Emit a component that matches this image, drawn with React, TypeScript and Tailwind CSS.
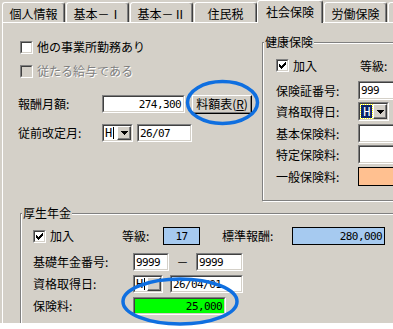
import React from "react";

const JP = "font-['Noto_Sans_CJK_JP',sans-serif]";
const MONO = "font-['DejaVu_Sans_Mono',monospace] text-[11px] tracking-[-0.6px] leading-none";

function CheckMark() {
  const px: [number, number][] = [
    [6, 0], [5, 1], [6, 1], [0, 2], [4, 2], [5, 2], [6, 2],
    [0, 3], [1, 3], [3, 3], [4, 3], [5, 3],
    [0, 4], [1, 4], [2, 4], [3, 4], [4, 4],
    [1, 5], [2, 5], [3, 5], [2, 6],
  ];
  return (
    <svg width="7" height="7" viewBox="0 0 7 7" shapeRendering="crispEdges">
      {px.map(([x, y], i) => (
        <rect key={i} x={x} y={y} width="1" height="1" fill="#000" />
      ))}
    </svg>
  );
}

function Check({ checked, disabled }: { checked?: boolean; disabled?: boolean }) {
  return (
    <div className="w-[13px] h-[13px] shrink-0 border border-t-[#808080] border-l-[#808080] border-b-white border-r-white">
      <div
        className={`w-full h-full border border-t-[#404040] border-l-[#404040] border-b-[#d4d0c8] border-r-[#d4d0c8] flex items-center justify-center ${
          disabled ? "bg-[#d4d0c8]" : "bg-white"
        }`}
      >
        {checked && <CheckMark />}
      </div>
    </div>
  );
}

function Edit({
  className = "",
  bg = "bg-white",
  right,
  children,
}: {
  className?: string;
  bg?: string;
  right?: boolean;
  children?: React.ReactNode;
}) {
  return (
    <div className={`shrink-0 border border-t-[#808080] border-l-[#808080] border-b-white border-r-white ${className}`}>
      <div
        className={`w-full h-full border border-t-[#404040] border-l-[#404040] border-b-[#d4d0c8] border-r-[#d4d0c8] ${bg} flex items-center ${
          right ? "justify-end pr-[2px]" : "pl-[1px]"
        } ${MONO} text-black overflow-hidden`}
      >
        {children}
      </div>
    </div>
  );
}

function Flat({
  className = "",
  bg,
  children,
}: {
  className?: string;
  bg: string;
  children?: React.ReactNode;
}) {
  return (
    <div className={`shrink-0 border border-black ${bg} flex items-center justify-end pr-[2px] ${MONO} ${className}`}>
      {children}
    </div>
  );
}

function Arrow() {
  return (
    <svg width="7" height="4" viewBox="0 0 7 4" shapeRendering="crispEdges">
      <rect x="0" y="0" width="7" height="1" fill="#000" />
      <rect x="1" y="1" width="5" height="1" fill="#000" />
      <rect x="2" y="2" width="3" height="1" fill="#000" />
      <rect x="3" y="3" width="1" height="1" fill="#000" />
    </svg>
  );
}

function Combo({
  className = "",
  selected,
  arrow = true,
}: {
  className?: string;
  selected?: boolean;
  arrow?: boolean;
}) {
  return (
    <div className={`shrink-0 border border-t-[#808080] border-l-[#808080] border-b-white border-r-white ${className}`}>
      <div className="w-full h-full border border-t-[#404040] border-l-[#404040] border-b-[#d4d0c8] border-r-[#d4d0c8] bg-white flex">
        <div className="flex-1 flex items-center pl-[1px] overflow-hidden">
          {selected ? (
            <div className="h-[13px] w-[11px] bg-[#0a246a] text-white flex items-center justify-center outline-1 outline-dotted outline-[#ffff00]">
              <span className={`${MONO} text-[12px]`}>H</span>
            </div>
          ) : (
            <>
              <span className={`${MONO} text-[12px]`}>H</span>
              <div className="w-[1px] h-[12px] bg-black ml-[1px]" />
            </>
          )}
        </div>
        <div className="w-[14px] h-full bg-[#d4d0c8] border border-t-white border-l-white border-b-[#404040] border-r-[#404040] shadow-[inset_-1px_-1px_0_#808080] flex items-center justify-center">
          {arrow && <Arrow />}
        </div>
      </div>
    </div>
  );
}

function Tab({ label, selected, w = "w-[63px]" }: { label: string; selected?: boolean; w?: string }) {
  if (selected) {
    return (
      <div className="relative z-10 -ml-[1px] mr-[1px] -mb-[1px] h-[23px] w-[66px] shrink-0 bg-[#d4d0c8] border-t border-l border-white border-r border-r-[#404040] rounded-t-[3px] shadow-[inset_-1px_0_0_#808080] flex justify-center pt-[5px]">
        <span className="text-[12px] leading-none">{label}</span>
      </div>
    );
  }
  return (
    <div className={`mr-[1px] h-[20px] ${w} shrink-0 border-t border-l border-white border-r border-r-[#404040] rounded-t-[3px] shadow-[inset_-1px_0_0_#808080] flex justify-center pt-[5px]`}>
      <span className="text-[12px] leading-none whitespace-nowrap">{label}</span>
    </div>
  );
}

function Group({
  title,
  className = "",
  children,
}: {
  title: string;
  className?: string;
  children?: React.ReactNode;
}) {
  return (
    <div className={`relative shrink-0 border border-[#808080] shadow-[inset_1px_1px_0_#fff,1px_1px_0_#fff] ${className}`}>
      <span className="absolute -top-[8px] left-[1px] bg-[#d4d0c8] px-[1px] text-[12px] leading-[14px] whitespace-nowrap">
        {title}
      </span>
      {children}
    </div>
  );
}

const L = "text-[12px] leading-none whitespace-nowrap shrink-0";

export default function App() {
  return (
    <div className={`w-[393px] h-[329px] bg-white overflow-hidden relative ${JP} text-black`}>
      <div className="h-[323px] bg-[#d4d0c8] flex flex-col overflow-hidden">
        {/* tabs */}
        <div className="h-[22px] flex items-end pl-[2px] shrink-0">
          <Tab label="個人情報" />
          <Tab label="基本－Ⅰ" />
          <Tab label="基本－Ⅱ" />
          <Tab label="住民税" />
          <Tab label="社会保険" selected />
          <Tab label="労働保険" />
          <Tab label="" w="w-[40px]" />
        </div>
        {/* panel */}
        <div className="flex-1 ml-[2px] border-t border-l border-white flex flex-col">
          <div className="flex shrink-0">
            {/* left column */}
            <div className="w-[256px] shrink-0 flex flex-col">
              <div className="mt-[17px] h-[14px] flex items-center pl-[17px]">
                <Check />
                <span className={`${L} ml-[4px]`}>他の事業所勤務あり</span>
              </div>
              <div className="mt-[10px] h-[14px] flex items-center pl-[17px]">
                <Check disabled />
                <span className={`${L} ml-[4px] text-[#808080] [text-shadow:1px_1px_0_#fff]`}>従たる給与である</span>
              </div>
              <div className="mt-[17px] h-[18px] flex items-center pl-[15px]">
                <span className={`${L} w-[84px]`}>報酬月額:</span>
                <Edit className="w-[83px] h-[18px]" right>
                  274,300
                </Edit>
                <div className="ml-[7px] w-[60px] h-[19px] shrink-0 border border-t-white border-l-white border-b-black border-r-black shadow-[inset_-1px_-1px_0_#808080] flex items-center justify-center">
                  <span className="text-[12px] leading-none whitespace-nowrap">
                    料額表(<span className="underline">R</span>)
                  </span>
                </div>
              </div>
              <div className="mt-[11px] h-[18px] flex items-center pl-[15px]">
                <span className={`${L} w-[84px]`}>従前改定月:</span>
                <Combo className="w-[31px] h-[18px]" />
                <Edit className="ml-[4px] w-[55px] h-[18px]">26/07</Edit>
              </div>
            </div>
            {/* 健康保険 */}
            <Group title="健康保険" className="mt-[19px] ml-[3px] w-[160px] h-[159px]">
              <div className="flex flex-col pl-[13px]">
                <div className="mt-[16px] h-[13px] flex items-center">
                  <div className="w-[84px] flex items-center shrink-0">
                    <Check checked />
                    <span className={`${L} ml-[4px]`}>加入</span>
                  </div>
                  <span className={L}>等級:</span>
                </div>
                <div className="mt-[9px] h-[19px] flex items-center">
                  <span className={`${L} w-[82px]`}>保険証番号:</span>
                  <Edit className="w-[60px] h-[19px]">999</Edit>
                </div>
                <div className="mt-[2px] h-[19px] flex items-center">
                  <span className={`${L} w-[82px]`}>資格取得日:</span>
                  <Combo className="w-[31px] h-[19px]" selected />
                  <Edit className="ml-[5px] w-[40px] h-[19px]" />
                </div>
                <div className="mt-[3px] h-[19px] flex items-center">
                  <span className={`${L} w-[82px]`}>基本保険料:</span>
                  <Edit className="w-[60px] h-[19px]" />
                </div>
                <div className="mt-[2px] h-[19px] flex items-center">
                  <span className={`${L} w-[82px]`}>特定保険料:</span>
                  <Edit className="w-[60px] h-[19px]" />
                </div>
                <div className="mt-[3px] h-[19px] flex items-center">
                  <span className={`${L} w-[82px]`}>一般保険料:</span>
                  <Flat className="w-[60px] h-[19px]" bg="bg-[#ffc090]" />
                </div>
              </div>
            </Group>
          </div>
          {/* 厚生年金 */}
          <Group title="厚生年金" className="mt-[12px] ml-[17px] w-[400px] h-[140px]">
            <div className="flex flex-col pl-[12px]">
              <div className="mt-[13px] h-[18px] flex items-center">
                <div className="w-[89px] flex items-center shrink-0">
                  <Check checked />
                  <span className={`${L} ml-[4px]`}>加入</span>
                </div>
                <span className={`${L} w-[41px]`}>等級:</span>
                <Flat className="w-[37px] h-[18px] !justify-center !pr-0" bg="bg-[#a6caf0]">
                  17
                </Flat>
                <span className={`${L} ml-[22px] w-[70px]`}>標準報酬:</span>
                <Flat className="w-[93px] h-[18px]" bg="bg-[#a6caf0]">
                  280,000
                </Flat>
              </div>
              <div className="mt-[8px] h-[18px] flex items-center">
                <span className={`${L} w-[100px]`}>基礎年金番号:</span>
                <Edit className="w-[36px] h-[18px]">9999</Edit>
                <span className={`${L} w-[27px] text-center`}>－</span>
                <Edit className="w-[47px] h-[18px]">9999</Edit>
              </div>
              <div className="mt-[4px] h-[18px] flex items-center">
                <span className={`${L} w-[100px]`}>資格取得日:</span>
                <Combo className="w-[30px] h-[18px]" arrow={false} />
                <Edit className="ml-[7px] w-[73px] h-[18px]">26/04/01</Edit>
              </div>
              <div className="mt-[4px] h-[18px] flex items-center">
                <span className={`${L} w-[100px]`}>保険料:</span>
                <Edit className="w-[93px] h-[18px]" bg="bg-[#00ff00]" right>
                  25,000
                </Edit>
              </div>
            </div>
          </Group>
        </div>
      </div>
      {/* annotation ellipses */}
      <svg className="absolute inset-0 pointer-events-none" width="393" height="329" viewBox="0 0 393 329">
        <ellipse cx="222.5" cy="102.5" rx="35" ry="21" fill="none" stroke="#0f6fe0" strokeWidth="3.5" />
        <ellipse cx="180" cy="301.5" rx="57" ry="22.5" fill="none" stroke="#0f6fe0" strokeWidth="3.5" />
      </svg>
    </div>
  );
}
